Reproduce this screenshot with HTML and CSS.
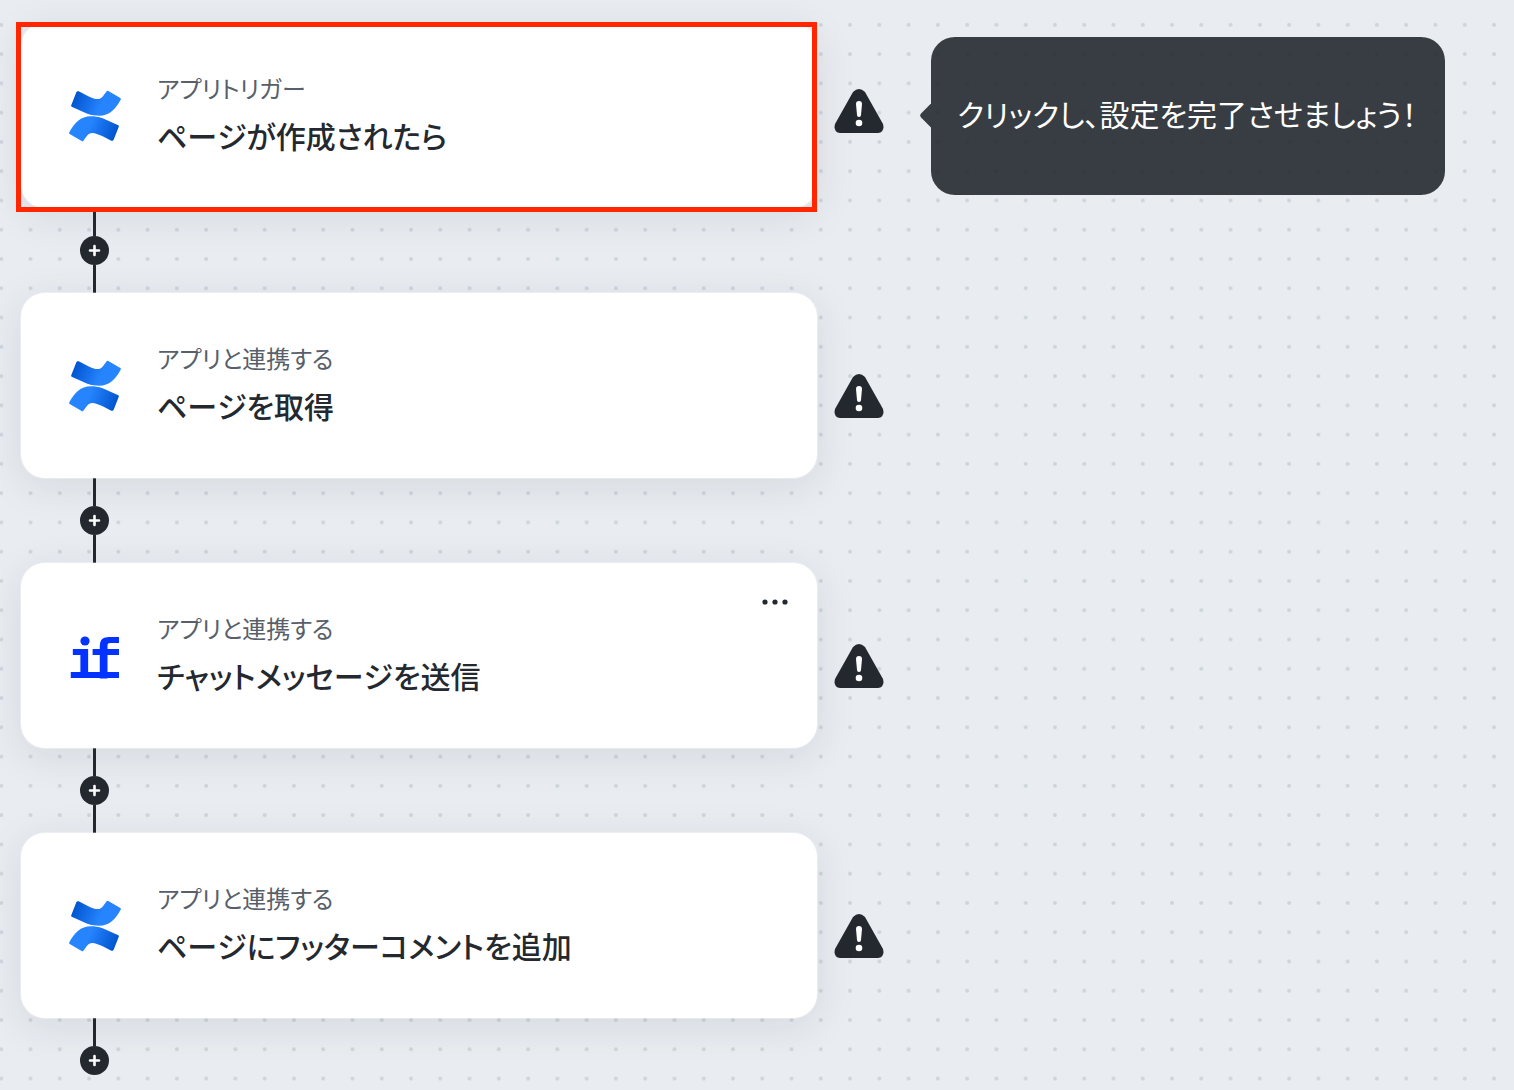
FILE: index.html
```html
<!DOCTYPE html>
<html lang="ja">
<head>
  <meta charset="UTF-8" />
  <meta name="viewport" content="width=device-width, initial-scale=1.0" />
  <title>フロー</title>
  <link rel="stylesheet" href="styles.css">
</head>
<body>
  <!-- Shared shapes -->
  <svg class="defs" aria-hidden="true">
    <defs>
      <linearGradient id="blue" gradientUnits="userSpaceOnUse" x1="36" y1="56" x2="118" y2="90">
        <stop offset="0" stop-color="#0052cc" />
        <stop offset="1" stop-color="#2684ff" />
      </linearGradient>
      <path id="wave" d="M52 35 Q54 34 56 35 L82 48 C106 59 119 64 130 48 L140 35 Q142 32 145 34 L181 55 Q184 57 182 60 C161 98 138 119 82 102 L35 81 Q32 79 34 76 L49 38 Q50 36 52 35 Z" />
    </defs>
    <symbol id="confluence" viewBox="24 28 162 162">
      <use href="#wave" fill="url(#blue)" />
      <use href="#wave" fill="url(#blue)" transform="rotate(180 105 109)" />
    </symbol>
    <symbol id="warning" viewBox="0 0 50 50">
      <path d="M19 6 Q25 0 31 6 L49 38 Q51 46 44 47 L6 47 Q-1 46 1 38 Z" fill="#24292f" />
      <path d="M22 18 Q22 15 25 15 Q28 15 28 18 L27 29 Q27 31 25 31 Q23 31 23 29 Z" fill="#fff" />
      <circle cx="25" cy="37" r="3.3" fill="#fff" />
    </symbol>
    <symbol id="plus" viewBox="0 0 29 29">
      <path d="M14.5 10 V19 M10 14.5 H19" stroke="#fff" stroke-width="2.6" stroke-linecap="round" />
    </symbol>
  </svg>

  <svg class="dots" aria-hidden="true">
    <defs>
      <pattern id="grid" width="20" height="20" patternUnits="userSpaceOnUse" patternTransform="translate(-13.4 10.2) scale(1.4635)">
        <circle cx="10" cy="10" r="1.4" fill="#cdd5dc" />
      </pattern>
    </defs>
    <rect width="100%" height="100%" fill="url(#grid)" />
  </svg>

  <main class="flow">
    <section class="step step-trigger">
      <article class="card card-selected">
        <svg class="app-icon"><use href="#confluence" /></svg>
        <div class="card-text">
          <p class="card-type">アプリトリガー</p>
          <h2 class="card-title">ページが作成されたら</h2>
        </div>
      </article>
      <svg class="warning" role="img" aria-label="警告"><use href="#warning" /></svg>
      <div class="tooltip" role="tooltip">クリックし、設定を完了させましょう！</div>
    </section>
    <div class="connector">
      <button class="add" aria-label="追加"><svg><use href="#plus" /></svg></button>
    </div>

    <section class="step">
      <article class="card">
        <svg class="app-icon"><use href="#confluence" /></svg>
        <div class="card-text">
          <p class="card-type">アプリと連携する</p>
          <h2 class="card-title">ページを取得</h2>
        </div>
      </article>
      <svg class="warning" role="img" aria-label="警告"><use href="#warning" /></svg>
    </section>
    <div class="connector">
      <button class="add" aria-label="追加"><svg><use href="#plus" /></svg></button>
    </div>

    <section class="step">
      <article class="card">
        <svg class="app-icon" viewBox="0 0 54 54" role="img" aria-label="if" fill="#0433ff">
          <text class="if-logo" x="-1 20" y="49">ıf</text>
          <circle cx="17" cy="12" r="4.6" />
          <rect x="40" y="8" width="11" height="6" />
          <rect x="40" y="20" width="11" height="6" />
          <rect x="3" y="43" width="48" height="6" />
        </svg>
        <div class="card-text">
          <p class="card-type">アプリと連携する</p>
          <h2 class="card-title">チャットメッセージを送信</h2>
        </div>
        <button class="menu" aria-label="メニュー">
          <svg viewBox="0 0 30 20">
            <circle cx="5" cy="10" r="2.6" />
            <circle cx="15" cy="10" r="2.6" />
            <circle cx="25" cy="10" r="2.6" />
          </svg>
        </button>
      </article>
      <svg class="warning" role="img" aria-label="警告"><use href="#warning" /></svg>
    </section>
    <div class="connector">
      <button class="add" aria-label="追加"><svg><use href="#plus" /></svg></button>
    </div>

    <section class="step">
      <article class="card">
        <svg class="app-icon"><use href="#confluence" /></svg>
        <div class="card-text">
          <p class="card-type">アプリと連携する</p>
          <h2 class="card-title">ページにフッターコメントを追加</h2>
        </div>
      </article>
      <svg class="warning" role="img" aria-label="警告"><use href="#warning" /></svg>
    </section>
    <div class="connector connector-last">
      <button class="add" aria-label="追加"><svg><use href="#plus" /></svg></button>
    </div>
  </main>
</body>
</html>
```
FILE: styles.css
```css
:root {
  --bg-color: #e9edf2;
  --dark: #24292f;
  --muted: #57606a;
  --highlight: #ff2600;
}
* { box-sizing: border-box; }
body {
  margin: 0;
  position: relative;
  min-height: 100vh;
  background-color: var(--bg-color);
  color: var(--dark);
  font-family: "Noto Sans CJK JP", sans-serif;
  font-feature-settings: "palt";
  font-kerning: none;
}
.defs {
  position: absolute;
  width: 0;
  height: 0;
}
.dots {
  position: absolute;
  inset: 0;
  width: 100%;
  height: 100%;
}
.flow {
  position: relative;
  padding: 23px 21px 15px;
}
.step {
  display: flex;
  align-items: flex-start;
}
.card {
  position: relative;
  display: flex;
  align-items: center;
  gap: 35px;
  flex: 0 1 796px;
  padding: 49px 25px 53px 47px;
  background: #fff;
  border-radius: 24px;
  box-shadow: 0 0 0 1px rgba(255, 255, 255, 0.3), 0 8px 40px rgba(36, 41, 47, 0.1);
}
.card-selected::after {
  content: "";
  position: absolute;
  inset: -1px 0 -4px -5px;
  border: 5px solid var(--highlight);
}
.app-icon {
  flex: none;
  width: 54px;
  height: 54px;
  margin-top: 4px;
  overflow: visible;
}
.if-logo {
  font: bold 54px "DejaVu Sans Mono", monospace;
}
.card-text {
  flex: 1;
}
.card-type {
  margin: 0 0 11px;
  font-size: 24px;
  line-height: 32px;
  color: var(--muted);
}
.card-title {
  margin: 0;
  font-size: 30px;
  line-height: 40px;
  font-weight: 500;
}
.warning {
  flex: none;
  width: 50px;
  height: 50px;
  margin: 78px 0 0 17px;
}
.step-trigger .warning {
  margin-top: 63px;
}
.tooltip {
  position: relative;
  align-self: center;
  margin-left: 47px;
  padding: 54px 28px 60px 26px;
  border-radius: 24px;
  background: rgba(36, 41, 47, 0.9);
  color: #fff;
  font-size: 30px;
  line-height: 44px;
}
.tooltip::before {
  content: "";
  position: absolute;
  left: -11px;
  top: 67px;
  width: 11px;
  height: 24px;
  background: rgba(36, 41, 47, 0.9);
  clip-path: polygon(100% 0, 10% 42%, 0 50%, 10% 58%, 100% 100%);
}
.connector {
  display: flex;
  flex-direction: column;
  align-items: center;
  width: 29px;
  height: 85px;
  margin-left: 59px;
}
.connector::before,
.connector::after {
  content: "";
  flex: 1;
  width: 3px;
  background: var(--dark);
}
.connector-last {
  height: 57px;
}
.connector-last::after {
  display: none;
}
button {
  padding: 0;
  border: none;
  background: none;
  cursor: pointer;
}
button svg {
  display: block;
  width: 100%;
  height: 100%;
}
.add {
  width: 29px;
  height: 29px;
  border-radius: 50%;
  background: var(--dark);
}
.menu {
  align-self: flex-start;
  width: 30px;
  height: 20px;
  margin: -20px 2px 0 0;
  fill: var(--dark);
}
```
